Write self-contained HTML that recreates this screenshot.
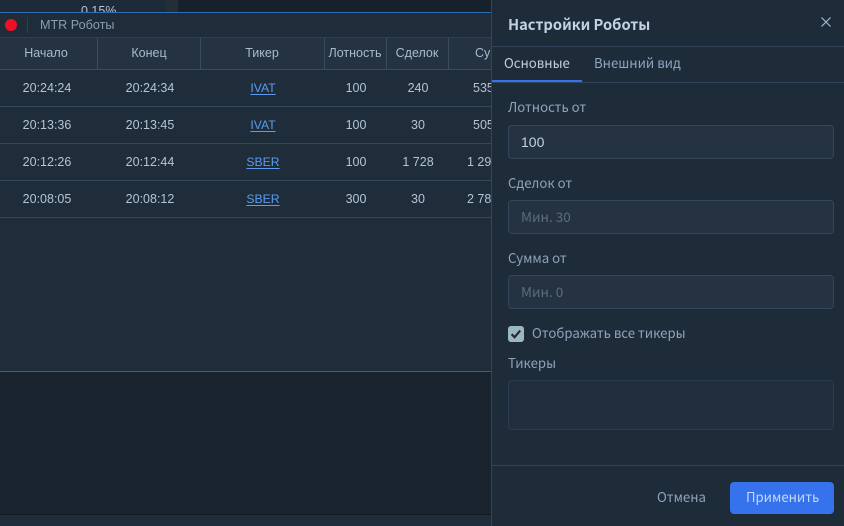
<!DOCTYPE html>
<html><head><meta charset="utf-8">
<style>
html,body{margin:0;padding:0;width:844px;height:526px;overflow:hidden;background:#18232d}
*{box-sizing:border-box}
.a{position:absolute}
body{position:relative;font-family:"Liberation Sans",sans-serif}
.t{position:absolute;white-space:nowrap;line-height:16px}
.c{transform:translateX(-50%);font-size:12.5px;color:#b4c4d6}
.h{transform:translateX(-50%);font-size:12.5px;color:#a8bbd0}
.l{color:#5b9bf0;font-size:12.2px;text-decoration:underline;text-underline-offset:2px}
.p{font-family:"Noto Sans CJK JP","DejaVu Sans",sans-serif}
.lab{font-size:13.2px;color:#8fa3ba;left:508px}
.inp{position:absolute;left:508px;width:326px;background:#243241;border:1px solid #34465a;border-radius:4px}
</style></head><body>
<div class="a" style="left:0;top:0;width:491px;height:12px;background:#1d2a37"></div>
<div class="a" style="left:166px;top:0;width:12px;height:12px;background:#232e39"></div>
<div class="a" style="left:178px;top:0;width:313px;height:12px;background:#17212b"></div>
<div class="t" style="left:81px;top:3px;font-size:12.5px;color:#b4c4d6">0.15%</div>
<div class="a" style="left:0;top:12px;width:491px;height:1px;background:#2f6db5"></div>
<div class="a" style="left:0;top:13px;width:491px;height:24px;background:#1f2c3a"></div>
<div class="a" style="left:5px;top:19px;width:12px;height:12px;border-radius:50%;background:#ee1125"></div>
<div class="a" style="left:27px;top:17px;width:1px;height:16px;background:#2f3f50"></div>
<div class="t" style="left:40px;top:17px;font-size:12.6px;color:#8b9db2">MTR Роботы</div>

<div class="a" style="left:0;top:37px;width:491px;height:33px;background:#243241;border-top:1px solid #2e3f51;border-bottom:1px solid #3a4c5f"></div>
<div class="a" style="left:97px;top:38px;width:1px;height:31px;background:#3a4c5f"></div>
<div class="a" style="left:200px;top:38px;width:1px;height:31px;background:#3a4c5f"></div>
<div class="a" style="left:324px;top:38px;width:1px;height:31px;background:#3a4c5f"></div>
<div class="a" style="left:386px;top:38px;width:1px;height:31px;background:#3a4c5f"></div>
<div class="a" style="left:448px;top:38px;width:1px;height:31px;background:#3a4c5f"></div>
<div class="t h" style="left:46px;top:45px">Начало</div>
<div class="t h" style="left:149px;top:45px">Конец</div>
<div class="t h" style="left:262px;top:45px">Тикер</div>
<div class="t h" style="left:355px;top:45px">Лотность</div>
<div class="t h" style="left:417px;top:45px">Сделок</div>
<div class="t" style="left:475px;top:45px;font-size:12.5px;color:#a8bbd0">Сумма</div>

<div class="a" style="left:0;top:70px;width:491px;height:301px;background:#1f2c3a"></div>
<div class="a" style="left:0;top:106px;width:491px;height:1px;background:#364759"></div>
<div class="a" style="left:0;top:143px;width:491px;height:1px;background:#364759"></div>
<div class="a" style="left:0;top:180px;width:491px;height:1px;background:#364759"></div>
<div class="a" style="left:0;top:217px;width:491px;height:1px;background:#364759"></div>

<div class="t c" style="left:47px;top:80px">20:24:24</div><div class="t c" style="left:150px;top:80px">20:24:34</div><div class="t c l" style="left:263px;top:80px">IVAT</div><div class="t c" style="left:356px;top:80px">100</div><div class="t c" style="left:418px;top:80px">240</div><div class="t" style="left:473px;top:80px;font-size:12.5px;color:#b4c4d6">535 000</div>
<div class="t c" style="left:47px;top:117px">20:13:36</div><div class="t c" style="left:150px;top:117px">20:13:45</div><div class="t c l" style="left:263px;top:117px">IVAT</div><div class="t c" style="left:356px;top:117px">100</div><div class="t c" style="left:418px;top:117px">30</div><div class="t" style="left:473px;top:117px;font-size:12.5px;color:#b4c4d6">505 000</div>
<div class="t c" style="left:47px;top:154px">20:12:26</div><div class="t c" style="left:150px;top:154px">20:12:44</div><div class="t c l" style="left:263px;top:154px">SBER</div><div class="t c" style="left:356px;top:154px">100</div><div class="t c" style="left:418px;top:154px">1 728</div><div class="t" style="left:467px;top:154px;font-size:12.5px;color:#b4c4d6">1 290 000</div>
<div class="t c" style="left:47px;top:191px">20:08:05</div><div class="t c" style="left:150px;top:191px">20:08:12</div><div class="t c l" style="left:263px;top:191px">SBER</div><div class="t c" style="left:356px;top:191px">300</div><div class="t c" style="left:418px;top:191px">30</div><div class="t" style="left:467px;top:191px;font-size:12.5px;color:#b4c4d6">2 780 000</div>

<div class="a" style="left:0;top:371px;width:491px;height:1px;background:#35608a"></div>
<div class="a" style="left:0;top:372px;width:491px;height:142px;background:#18232d"></div>
<div class="a" style="left:0;top:514px;width:491px;height:1px;background:#141b22"></div>
<div class="a" style="left:0;top:515px;width:491px;height:11px;background:#1f2c3a"></div>

<div class="a" style="left:491px;top:0;width:353px;height:526px;background:#1e2b39;border-left:1px solid #35455a"></div>
<div class="t p" style="left:508px;top:16px;font-size:14.7px;font-weight:700;color:#c3d2e3;line-height:18px">Настройки Роботы</div>
<svg class="a" style="left:820px;top:16px" width="12" height="12" viewBox="0 0 12 12"><path d="M1.5 1.5L10.5 10.5M10.5 1.5L1.5 10.5" stroke="#a9bacd" stroke-width="1.2" fill="none"/></svg>
<div class="a" style="left:492px;top:46px;width:352px;height:1px;background:#32445a"></div>
<div class="t p" style="left:504px;top:55px;font-size:13.2px;color:#c0cfe0">Основные</div>
<div class="t p" style="left:594px;top:55px;font-size:13.2px;color:#8fa5c0">Внешний вид</div>
<div class="a" style="left:492px;top:82px;width:352px;height:1px;background:#32445a"></div>
<div class="a" style="left:492px;top:80px;width:90px;height:2px;background:#3572ec"></div>

<div class="t p lab" style="top:99px">Лотность от</div>
<div class="inp" style="top:125px;height:34px"></div>
<div class="t" style="left:521px;top:134px;font-size:14px;color:#c3d2e3">100</div>
<div class="t p lab" style="top:175px">Сделок от</div>
<div class="inp" style="top:200px;height:34px"></div>
<div class="t p" style="left:521px;top:208px;font-size:13.5px;color:#5d6c7b">Мин. 30</div>
<div class="t p lab" style="top:250px">Сумма от</div>
<div class="inp" style="top:275px;height:34px"></div>
<div class="t p" style="left:521px;top:283px;font-size:13.5px;color:#5d6c7b">Мин. 0</div>
<div class="a" style="left:508px;top:326px;width:16px;height:16px;background:#9ab7c4;border-radius:3px"></div>
<svg class="a" style="left:508px;top:326px" width="16" height="16" viewBox="0 0 16 16"><path d="M3.6 8.2L6.6 11.2L12.2 4.6" stroke="#33282a" stroke-width="2.2" fill="none"/></svg>
<div class="t p" style="left:532px;top:325px;font-size:13.2px;color:#8fa3ba">Отображать все тикеры</div>
<div class="t p lab" style="top:355px">Тикеры</div>
<div class="inp" style="top:380px;height:50px;background:#202e3d;border-color:#2c3b4d"></div>
<div class="a" style="left:492px;top:465px;width:352px;height:1px;background:#32445a"></div>
<div class="t p" style="left:657px;top:489px;font-size:13.2px;color:#8fa3ba">Отмена</div>
<div class="a" style="left:730px;top:482px;width:104px;height:32px;background:#3572ec;border-radius:4px"></div>
<div class="t p" style="left:746px;top:489px;font-size:13.2px;color:#c3daf8">Применить</div>
</body></html>
